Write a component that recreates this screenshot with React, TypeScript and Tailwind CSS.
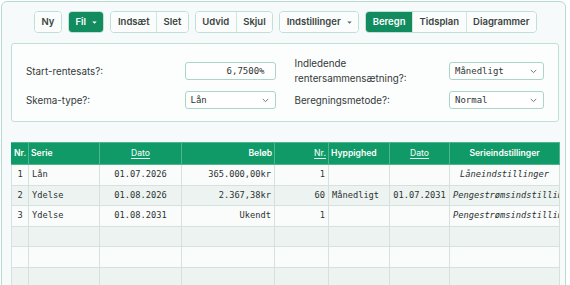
import React from "react";

const sans = "font-['Inter','Liberation_Sans',sans-serif]";
const mono = "font-['DejaVu_Sans_Mono','Liberation_Mono',monospace]";

function Caret({ className }: { className?: string }) {
  return (
    <svg width="5" height="3" viewBox="0 0 6 4" className={className}>
      <path d="M0 0.5h6L3 3.5z" fill="currentColor" />
    </svg>
  );
}

function Chevron() {
  return (
    <svg width="7" height="5" viewBox="0 0 7 5" className="text-[#6b7b76]">
      <path d="M0.8 1l2.7 2.6L6.2 1" fill="none" stroke="currentColor" strokeWidth="1" />
    </svg>
  );
}

type Btn = { label: string; active?: boolean; caret?: boolean };

function ButtonGroup({ items }: { items: Btn[] }) {
  return (
    <div className="flex h-[22px] overflow-hidden rounded-[4px] border border-[#bfe0d5]">
      {items.map((b, i) => (
        <div
          key={b.label}
          className={`flex items-center gap-[6px] px-[6.5px] text-[9.5px] font-semibold ${
            i > 0 ? "border-l border-[#cfe6de]" : ""
          } ${b.active ? "bg-[#128b5f] text-white" : "bg-[#fbfdfc] text-[#3a4441]"}`}
        >
          {b.label}
          {b.caret && <Caret className={b.active ? "text-white" : "text-[#5b6663]"} />}
        </div>
      ))}
    </div>
  );
}

function Field({ value, chevron = false }: { value: string; chevron?: boolean }) {
  return (
    <div
      className={`flex h-[18px] items-center rounded-[3px] border border-[#a9d6c6] bg-white pl-[5px] ${
        chevron ? "justify-between pr-[6px]" : "justify-end pr-[10px]"
      } ${mono} text-[9px] text-[#2d3532]`}
    >
      <span>{value}</span>
      {chevron && <Chevron />}
    </div>
  );
}

const cols = [
  { w: 17, label: "Nr.", align: "text-left", link: false },
  { w: 71, label: "Serie", align: "text-left", link: false },
  { w: 82, label: "Dato", align: "text-center", link: true },
  { w: 93, label: "Beløb", align: "text-right", link: false },
  { w: 54, label: "Nr.", align: "text-right", link: true },
  { w: 61, label: "Hyppighed", align: "text-left", link: false },
  { w: 60, label: "Dato", align: "text-center", link: true },
  { w: 110, label: "Serieindstillinger", align: "text-center", link: false },
];

const rows = [
  ["1", "Lån", "01.07.2026", "365.000,00kr", "1", "", "", "Låneindstillinger"],
  ["2", "Ydelse", "01.08.2026", "2.367,38kr", "60", "Månedligt", "01.07.2031", "Pengestrømsindstillinger"],
  ["3", "Ydelse", "01.08.2031", "Ukendt", "1", "", "", "Pengestrømsindstillinger"],
  ["", "", "", "", "", "", "", ""],
  ["", "", "", "", "", "", "", ""],
  ["", "", "", "", "", "", "", ""],
];

const cellAlign = ["text-center", "text-left", "text-center", "text-right", "text-right", "text-left", "text-center", "text-center"];

export default function App() {
  return (
    <div className={`h-[285px] w-[570px] overflow-hidden bg-white pl-[1px] pt-[1px] ${sans}`}>
      <div className="h-[300px] w-[565px] rounded-[6px] border border-[#b5dccf] bg-[#f7fafa] pl-[9px] pr-[5px]">
        <div className="flex justify-center gap-[6px] pt-[9px]">
          <ButtonGroup items={[{ label: "Ny" }]} />
          <ButtonGroup items={[{ label: "Fil", active: true, caret: true }]} />
          <ButtonGroup items={[{ label: "Indsæt" }, { label: "Slet" }]} />
          <ButtonGroup items={[{ label: "Udvid" }, { label: "Skjul" }]} />
          <ButtonGroup items={[{ label: "Indstillinger", caret: true }]} />
          <ButtonGroup items={[{ label: "Beregn", active: true }, { label: "Tidsplan" }, { label: "Diagrammer" }]} />
        </div>

        <div className="mt-[10px] grid w-[548px] grid-cols-2 gap-x-[19px] gap-y-[5px] rounded-[3px] border border-[#bfe0d5] bg-[#fcfdfd] px-[14px] py-[12px] text-[9.8px] leading-[15px] text-[#333a38]">
          <div className="flex items-center justify-between">
            <span>Start-rentesats?:</span>
            <div className="w-[91px]">
              <Field value="6,7500%" />
            </div>
          </div>
          <div className="flex items-center justify-between">
            <span>
              Indledende
              <br />
              rentersammensætning?:
            </span>
            <div className="w-[95px]">
              <Field value="Månedligt" chevron />
            </div>
          </div>
          <div className="flex items-center justify-between">
            <span>Skema-type?:</span>
            <div className="w-[91px]">
              <Field value="Lån" chevron />
            </div>
          </div>
          <div className="flex items-center justify-between">
            <span>Beregningsmetode?:</span>
            <div className="w-[95px]">
              <Field value="Normal" chevron />
            </div>
          </div>
        </div>

        <table className="mt-[20px] w-[548px] table-fixed border-collapse">
          <colgroup>
            {cols.map((c, i) => (
              <col key={i} style={{ width: c.w }} />
            ))}
          </colgroup>
          <thead>
            <tr className="h-[22px] bg-[#0f9a67] text-[8.6px] text-white">
              {cols.map((c, i) => (
                <th
                  key={i}
                  className={`overflow-hidden whitespace-nowrap border border-[#4fb58e] px-[2px] ${c.align} ${
                    c.link ? "font-medium text-[#e6f5ef] underline underline-offset-2" : "font-semibold"
                  } ${i === 0 ? "border-l-[#0f9a67]" : ""}`}
                >
                  {c.label}
                </th>
              ))}
            </tr>
          </thead>
          <tbody className={`${mono} text-[8.7px] text-[#2b3330]`}>
            {rows.map((r, ri) => (
              <tr key={ri} className={`h-[20.6px] ${ri % 2 === 1 ? "bg-[#edf3f1]" : "bg-[#fafcfc]"}`}>
                {r.map((v, ci) => (
                  <td
                    key={ci}
                    className={`overflow-hidden whitespace-nowrap border border-[#d6e0dd] px-[3px] ${cellAlign[ci]} ${
                      ci === 7 ? "italic" : ""
                    }`}
                  >
                    {v}
                  </td>
                ))}
              </tr>
            ))}
          </tbody>
        </table>
      </div>
    </div>
  );
}
